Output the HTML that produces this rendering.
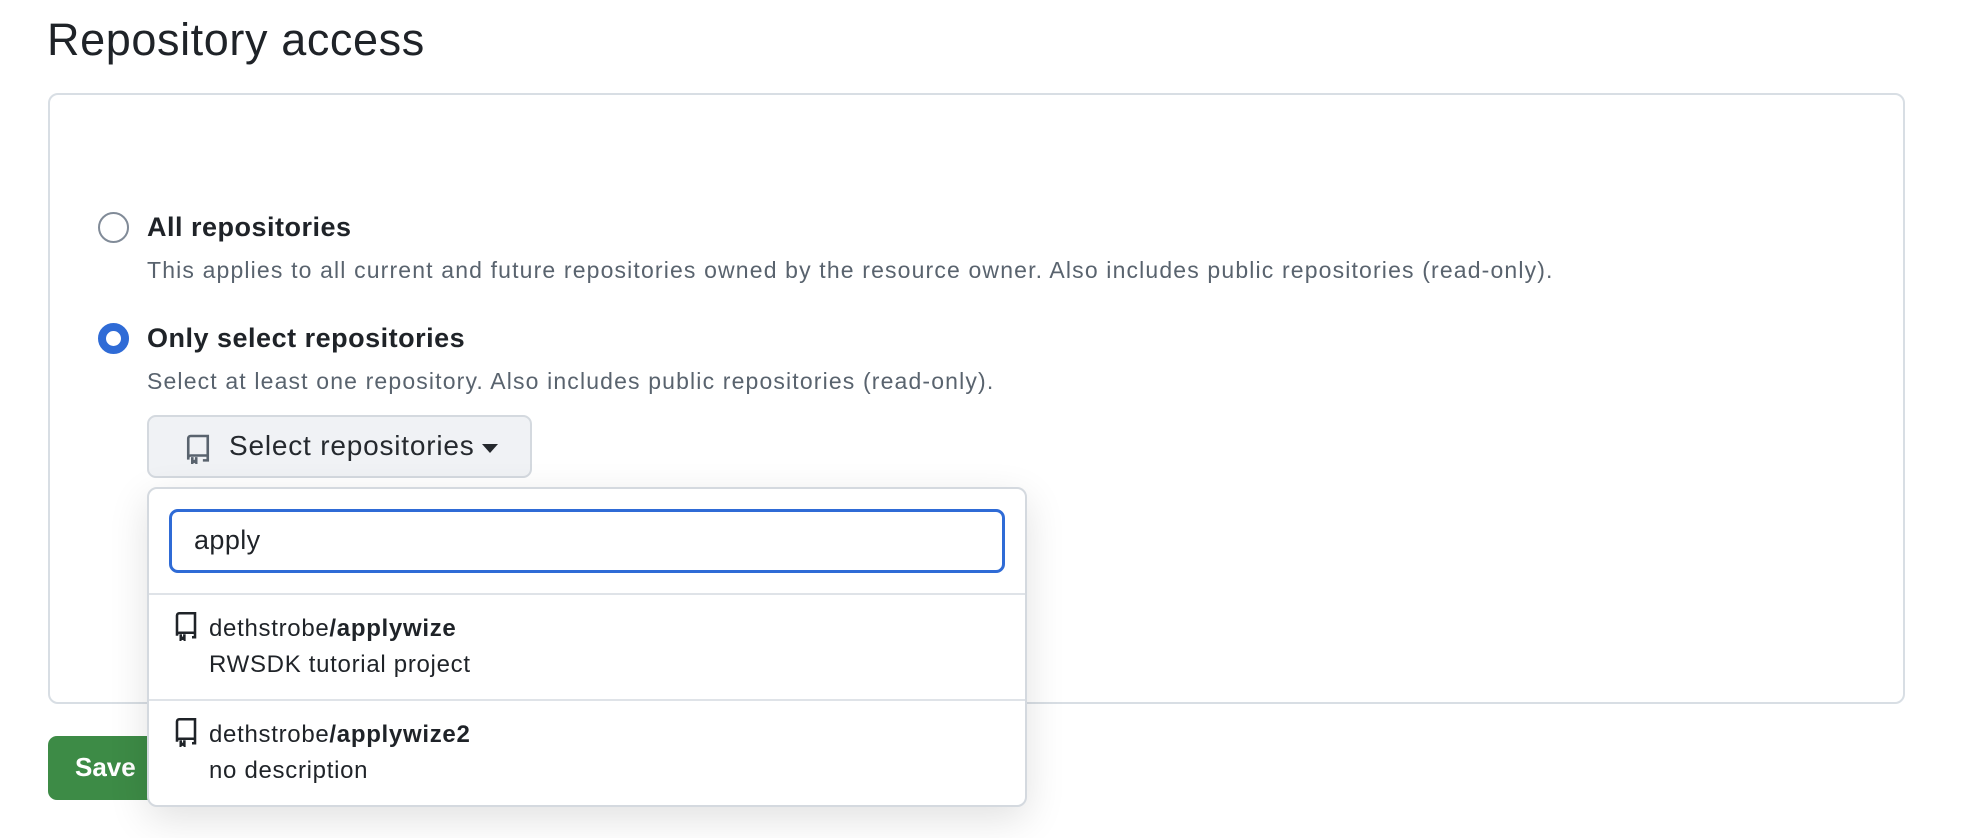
<!DOCTYPE html>
<html><head><meta charset="utf-8"><style>
*{box-sizing:border-box;margin:0;padding:0}
body{width:1974px;height:838px;background:#fff;font-family:"Liberation Sans",sans-serif;color:#1f2328;position:relative;overflow:hidden}
.abs{position:absolute}
h1{position:absolute;left:47px;top:14px;font-size:45px;font-weight:400;letter-spacing:0.6px}
.box{left:48px;top:93px;width:1857px;height:611px;border:2px solid #d8dee4;border-radius:10px}
.radio{width:31px;height:31px;border-radius:50%;border:2px solid #818b98;background:#fff}
.radio.on{border:8px solid #2f6bd6}
.lbl{font-size:27px;font-weight:700;line-height:32px;letter-spacing:0.5px}
.desc{font-size:23px;color:#59636e;line-height:28px;letter-spacing:1.15px}
.btn{left:147px;top:415px;width:385px;height:63px;background:#f0f2f5;border:2px solid #d4d9df;border-radius:9px;font-size:28px;font-weight:500;color:#25292e;letter-spacing:0.8px}
.dd{left:147px;top:487px;width:880px;height:320px;background:#fff;border:2px solid #d4d9df;border-radius:10px;box-shadow:0 12px 40px rgba(0,0,0,0.12)}
.inp{left:20px;top:20px;width:836px;height:64px;border:3px solid #2f6bd6;border-radius:9px;font-size:27px;padding-left:22px;line-height:56px;letter-spacing:0.4px}
.sep{left:0;width:876px;height:2px;background:#dfe3e8}
.it{font-size:24px;line-height:30px;letter-spacing:0.7px}
.save{left:48px;top:736px;width:120px;height:64px;background:#3d8b46;border-radius:9px;color:#fff;font-size:26px;font-weight:700;padding-left:27px;line-height:62px}
</style></head><body>
<h1>Repository access</h1>
<div class="abs box"></div>
<div class="abs radio" style="left:98px;top:212px"></div>
<div class="abs lbl" style="left:147px;top:211px">All repositories</div>
<div class="abs desc" style="left:147px;top:256px">This applies to all current and future repositories owned by the resource owner. Also includes public repositories (read-only).</div>
<div class="abs radio on" style="left:98px;top:323px"></div>
<div class="abs lbl" style="left:147px;top:322px">Only select repositories</div>
<div class="abs desc" style="left:147px;top:367px">Select at least one repository. Also includes public repositories (read-only).</div>
<div class="abs save">Save</div>
<div class="abs btn">
<svg class="abs" style="left:36px;top:17px" width="26" height="30" viewBox="0 0 16 18"><path d="M2 15.5V2.5A1.5 1.5 0 0 1 3.5 1H14v12H3.5A1.5 1.5 0 0 0 2 14.5M14 13v3h-3M4.5 14v3.5l1.2-1 1.2 1V14" fill="none" stroke="#59636e" stroke-width="1.6"/></svg>
<span class="abs" style="left:80px;top:13px">Select repositories</span>
<svg class="abs" style="left:333px;top:27px" width="16" height="9" viewBox="0 0 16 9"><path d="M0 0h16L8 9z" fill="#25292e"/></svg>
</div>
<div class="abs dd">
<div class="abs inp">apply</div>
<div class="abs sep" style="top:104px"></div>
<svg class="abs" style="left:25px;top:122px" width="24" height="30" viewBox="0 0 16 19"><path d="M2 16V2.5A1.5 1.5 0 0 1 3.5 1H14v13H3.5A1.5 1.5 0 0 0 2 15.5M14 14v3h-2M4.5 15v3.5l1.2-1 1.2 1V15" fill="none" stroke="#1f2328" stroke-width="1.7"/></svg>
<div class="abs it" style="left:60px;top:125px">dethstrobe<b>/applywize</b></div>
<div class="abs it" style="left:60px;top:161px">RWSDK tutorial project</div>
<div class="abs sep" style="top:210px"></div>
<svg class="abs" style="left:25px;top:228px" width="24" height="30" viewBox="0 0 16 19"><path d="M2 16V2.5A1.5 1.5 0 0 1 3.5 1H14v13H3.5A1.5 1.5 0 0 0 2 15.5M14 14v3h-2M4.5 15v3.5l1.2-1 1.2 1V15" fill="none" stroke="#1f2328" stroke-width="1.7"/></svg>
<div class="abs it" style="left:60px;top:231px">dethstrobe<b>/applywize2</b></div>
<div class="abs it" style="left:60px;top:267px">no description</div>
</div>
</body></html>
